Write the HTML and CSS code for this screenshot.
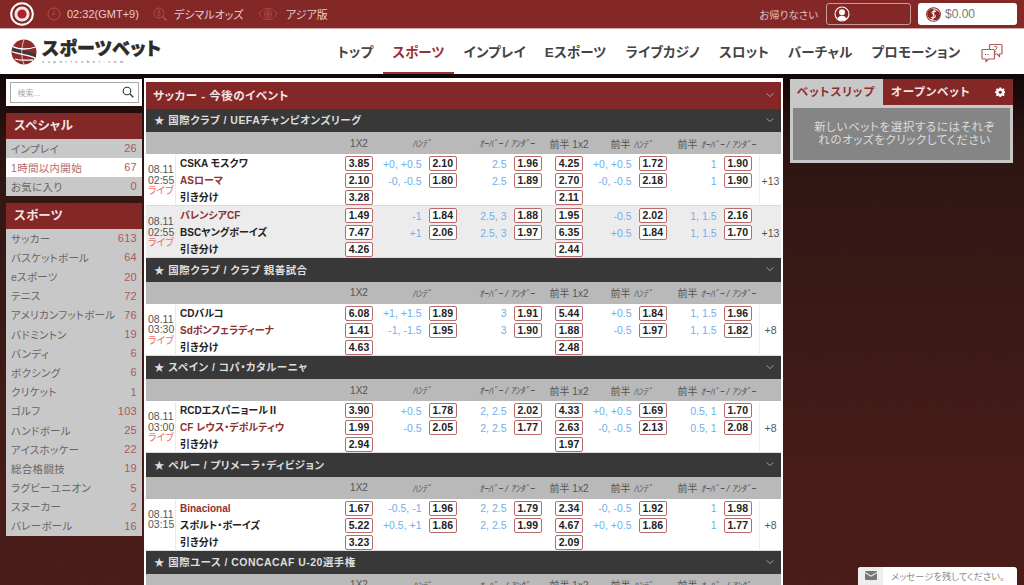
FILE: index.html
```html
<!DOCTYPE html>
<html lang="ja">
<head>
<meta charset="utf-8">
<title>スポーツベット</title>
<link rel="stylesheet" href="styles.css">
</head>
<body>
<div class="topbar">
  <svg class="brand-dot" viewBox="0 0 24 24"><circle cx="12" cy="12" r="10.8" fill="none" stroke="#fff" stroke-width="2"/><circle cx="12" cy="12" r="7.6" fill="#f3e6e6"/><circle cx="12" cy="12" r="4.6" fill="#b3202a"/></svg>
  <div class="tb-item clock">
    <svg class="tb-ic" viewBox="0 0 14 14"><circle cx="7" cy="7" r="6" fill="none" stroke="#b04a48"/><path d="M7 3.5V7.5H4.5" fill="none" stroke="#b04a48"/></svg>
    <span>02:32(GMT+9)</span>
  </div>
  <div class="tb-item odds">
    <svg class="tb-ic" viewBox="0 0 14 14"><circle cx="6" cy="6" r="5" fill="none" stroke="#b04a48"/><path d="M9.6 9.6L13.4 13.4" stroke="#b04a48" stroke-width="1.6"/><path d="M7.6 4.2C6.6 3.4 4.6 3.6 4.6 4.8S7.6 6 7.6 7.3 5.4 8.700 4.300 7.800M6 2.500V9.500" fill="none" stroke="#b04a48" stroke-width=".8"/></svg>
    <span>デシマルオッズ</span>
  </div>
  <div class="tb-item view">
    <svg class="tb-eye" viewBox="0 0 20 14"><path d="M1 7C4 2.500 7 1.500 10 1.500S16 2.500 19 7C16 11.500 13 12.500 10 12.500S4 11.500 1 7Z" fill="none" stroke="#b04a48"/><circle cx="10" cy="7" r="3.600" fill="none" stroke="#b04a48"/><circle cx="10" cy="7" r="1.800" fill="#b04a48"/></svg>
    <span>アジア版</span>
  </div>
  <div class="tb-right">
    <span class="greet">お帰りなさい</span>
    <div class="user-box">
      <svg class="user-ic" viewBox="0 0 16 16"><circle cx="8" cy="8" r="7" fill="none" stroke="#fff" stroke-width="1.100"/><circle cx="8" cy="6.200" r="3" fill="#fff"/><path d="M3.300 13C4 10.500 6 9.800 8 9.800S12 10.500 12.700 13C10 15 6 15 3.300 13Z" fill="#fff"/></svg>
    </div>
    <div class="balance">
      <svg class="bal-ic" viewBox="0 0 16 16"><circle cx="8" cy="8" r="7.300" fill="none" stroke="#842827" stroke-width="1.100"/><path d="M10.800 3.500A5.600 5.600 0 1 0 5.500 13Z" fill="#842827"/><path d="M5.200 12.500A5.600 5.600 0 1 0 11 3.300Z" fill="#842827"/><path d="M10.600 5C9.500 4 6.300 4.300 6.300 6S10 7.500 10 9.700 6.800 11.800 5.500 10.700M8.800 2L7.200 14" fill="none" stroke="#fff" stroke-width="1.100"/></svg>
      <span>$0.00</span>
    </div>
  </div>
</div>

<header class="header">
  <div class="logo">
    <svg class="logo-ball" viewBox="0 0 26 26">
      <circle cx="13" cy="13" r="12.500" fill="#8d2a2a"/>
      <path d="M2 8C8 12 18 12 25 15V19C18 15 7 15 1 12Z" fill="#3a3a3a"/>
      <path d="M2 7.500C8 11 18 10.500 24.500 8M1 12.500C7 15.500 18 15.500 25 19.500M4 20C10 22 17 21 22 21" fill="none" stroke="#fff" stroke-width="1.300"/>
      <path d="M13 .5C10 8 10 18 13 25.500" fill="none" stroke="#fff" stroke-width=".7"/>
    </svg>
    <div class="logo-text">
      <div class="logo-main">スポーツベット</div>
      <div class="logo-sub">suportsubet.com</div>
    </div>
  </div>
  <nav class="nav">
    <a class="nav-item">トップ</a>
    <a class="nav-item active">スポーツ</a>
    <a class="nav-item">インプレイ</a>
    <a class="nav-item">Eスポーツ</a>
    <a class="nav-item">ライブカジノ</a>
    <a class="nav-item">スロット</a>
    <a class="nav-item">バーチャル</a>
    <a class="nav-item">プロモーション</a>
  </nav>
  <svg class="chat-ic" viewBox="0 0 22 20"><path d="M8.500 2.500a1 1 0 0 1 1-1H20a1 1 0 0 1 1 1V10a1 1 0 0 1-1 1h-1.500v2.500L16 11H9.500a1 1 0 0 1-1-1Z" fill="#fff" stroke="#b05a5a" stroke-width="1.200"/><path d="M1 7.500a1 1 0 0 1 1-1h10.500a1 1 0 0 1 1 1V15a1 1 0 0 1-1 1H7.500L5 18.500V16H2a1 1 0 0 1-1-1Z" fill="#fff" stroke="#b05a5a" stroke-width="1.200"/><path d="M13 4.200C13.300 3 16 3 16 4.600 16 5.800 14.700 5.600 14.700 7M14.700 8.200V9" fill="none" stroke="#8a2a2a" stroke-width=".9"/><path d="M4 11.500h1M6.500 11.500h1" stroke="#8a2a2a"/></svg>
</header>

<div class="content">
  <aside class="left">
    <div class="search">
      <div class="search-in">
        <span>検索...</span>
        <svg viewBox="0 0 12 12"><circle cx="5" cy="5" r="3.800" fill="none" stroke="#333" stroke-width="1.100"/><path d="M8 8L11.300 11.300" stroke="#333" stroke-width="1.300"/></svg>
      </div>
    </div>
    <section class="side-box">
      <h3>スペシャル</h3>
      <div class="side-row"><span>インプレイ</span><em>26</em></div>
      <div class="side-row on"><span>1時間以内開始</span><em>67</em></div>
      <div class="side-row"><span>お気に入り</span><em>0</em></div>
    </section>
    <section class="side-box">
      <h3>スポーツ</h3>
      <div class="side-row"><span>サッカー</span><em>613</em></div>
      <div class="side-row"><span>バスケットボール</span><em>64</em></div>
      <div class="side-row"><span>eスポーツ</span><em>20</em></div>
      <div class="side-row"><span>テニス</span><em>72</em></div>
      <div class="side-row"><span>アメリカンフットボール</span><em>76</em></div>
      <div class="side-row"><span>バドミントン</span><em>19</em></div>
      <div class="side-row"><span>バンディ</span><em>6</em></div>
      <div class="side-row"><span>ボクシング</span><em>6</em></div>
      <div class="side-row"><span>クリケット</span><em>1</em></div>
      <div class="side-row"><span>ゴルフ</span><em>103</em></div>
      <div class="side-row"><span>ハンドボール</span><em>25</em></div>
      <div class="side-row"><span>アイスホッケー</span><em>22</em></div>
      <div class="side-row"><span>総合格闘技</span><em>19</em></div>
      <div class="side-row"><span>ラグビーユニオン</span><em>5</em></div>
      <div class="side-row"><span>スヌーカー</span><em>2</em></div>
      <div class="side-row"><span>バレーボール</span><em>16</em></div>
    </section>
  </aside>

  <main class="main">
    <div class="main-head"><span>サッカー - 今後のイベント</span><svg class="chev" viewBox="0 0 10 6"><path d="M1.500 1.500L5 4.500L8.500 1.500" fill="none" stroke="#c98f8f"/></svg></div>

    <div class="league"><span>★ 国際クラブ / UEFAチャンピオンズリーグ</span><svg class="chev" viewBox="0 0 10 6"><path d="M1.500 1.500L5 4.500L8.500 1.500" fill="none" stroke="#999"/></svg></div>
    <div class="labels"><i></i><i></i><b>1X2</b><b class="hw">ﾊﾝﾃﾞ</b><b class="hw">ｵｰﾊﾞｰ / ｱﾝﾀﾞｰ</b><b>前半 1x2</b><b>前半 <span class="hw">ﾊﾝﾃﾞ</span></b><b>前半 <span class="hw">ｵｰﾊﾞｰ / ｱﾝﾀﾞｰ</span></b><i></i></div>
    <div class="match">
      <div class="time">08.11<br>02:55<br><span class="live">ライブ</span></div>
      <div class="teams"><div>CSKA モスクワ</div><div class="hl">ASローマ</div><div>引き分け</div></div>
      <div class="mid"><b class="odd">3.85</b><b class="odd">2.10</b><b class="odd">3.28</b></div>
      <div class="side"><div class="ln"><span>+0, +0.5</span><b class="odd">2.10</b></div><div class="ln"><span>-0, -0.5</span><b class="odd">1.80</b></div></div>
      <div class="side"><div class="ln"><span>2.5</span><b class="odd">1.96</b></div><div class="ln"><span>2.5</span><b class="odd">1.89</b></div></div>
      <div class="mid"><b class="odd">4.25</b><b class="odd">2.70</b><b class="odd">2.11</b></div>
      <div class="side"><div class="ln"><span>+0, +0.5</span><b class="odd">1.72</b></div><div class="ln"><span>-0, -0.5</span><b class="odd">2.18</b></div></div>
      <div class="side"><div class="ln"><span>1</span><b class="odd">1.90</b></div><div class="ln"><span>1</span><b class="odd">1.90</b></div></div>
      <div class="more">+13</div>
    </div>
    <div class="match alt">
      <div class="time">08.11<br>02:55<br><span class="live">ライブ</span></div>
      <div class="teams"><div class="hl">バレンシアCF</div><div>BSCヤングボーイズ</div><div>引き分け</div></div>
      <div class="mid"><b class="odd">1.49</b><b class="odd">7.47</b><b class="odd">4.26</b></div>
      <div class="side"><div class="ln"><span>-1</span><b class="odd">1.84</b></div><div class="ln"><span>+1</span><b class="odd">2.06</b></div></div>
      <div class="side"><div class="ln"><span>2.5, 3</span><b class="odd">1.88</b></div><div class="ln"><span>2.5, 3</span><b class="odd">1.97</b></div></div>
      <div class="mid"><b class="odd">1.95</b><b class="odd">6.35</b><b class="odd">2.44</b></div>
      <div class="side"><div class="ln"><span>-0.5</span><b class="odd">2.02</b></div><div class="ln"><span>+0.5</span><b class="odd">1.84</b></div></div>
      <div class="side"><div class="ln"><span>1, 1.5</span><b class="odd">2.16</b></div><div class="ln"><span>1, 1.5</span><b class="odd">1.70</b></div></div>
      <div class="more">+13</div>
    </div>

    <div class="league"><span>★ 国際クラブ / クラブ 親善試合</span><svg class="chev" viewBox="0 0 10 6"><path d="M1.500 1.500L5 4.500L8.500 1.500" fill="none" stroke="#999"/></svg></div>
    <div class="labels"><i></i><i></i><b>1X2</b><b class="hw">ﾊﾝﾃﾞ</b><b class="hw">ｵｰﾊﾞｰ / ｱﾝﾀﾞｰ</b><b>前半 1x2</b><b>前半 <span class="hw">ﾊﾝﾃﾞ</span></b><b>前半 <span class="hw">ｵｰﾊﾞｰ / ｱﾝﾀﾞｰ</span></b><i></i></div>
    <div class="match">
      <div class="time">08.11<br>03:30<br><span class="live">ライブ</span></div>
      <div class="teams"><div>CDバルコ</div><div class="hl">Sdポンフェラディーナ</div><div>引き分け</div></div>
      <div class="mid"><b class="odd">6.08</b><b class="odd">1.41</b><b class="odd">4.63</b></div>
      <div class="side"><div class="ln"><span>+1, +1.5</span><b class="odd">1.89</b></div><div class="ln"><span>-1, -1.5</span><b class="odd">1.95</b></div></div>
      <div class="side"><div class="ln"><span>3</span><b class="odd">1.91</b></div><div class="ln"><span>3</span><b class="odd">1.90</b></div></div>
      <div class="mid"><b class="odd">5.44</b><b class="odd">1.88</b><b class="odd">2.48</b></div>
      <div class="side"><div class="ln"><span>+0.5</span><b class="odd">1.84</b></div><div class="ln"><span>-0.5</span><b class="odd">1.97</b></div></div>
      <div class="side"><div class="ln"><span>1, 1.5</span><b class="odd">1.96</b></div><div class="ln"><span>1, 1.5</span><b class="odd">1.82</b></div></div>
      <div class="more">+8</div>
    </div>

    <div class="league"><span>★ スペイン / コパ・カタルーニャ</span><svg class="chev" viewBox="0 0 10 6"><path d="M1.500 1.500L5 4.500L8.500 1.500" fill="none" stroke="#999"/></svg></div>
    <div class="labels"><i></i><i></i><b>1X2</b><b class="hw">ﾊﾝﾃﾞ</b><b class="hw">ｵｰﾊﾞｰ / ｱﾝﾀﾞｰ</b><b>前半 1x2</b><b>前半 <span class="hw">ﾊﾝﾃﾞ</span></b><b>前半 <span class="hw">ｵｰﾊﾞｰ / ｱﾝﾀﾞｰ</span></b><i></i></div>
    <div class="match">
      <div class="time">08.11<br>03:00<br><span class="live">ライブ</span></div>
      <div class="teams"><div>RCDエスパニョールⅡ</div><div class="hl">CF レウス・デポルティウ</div><div>引き分け</div></div>
      <div class="mid"><b class="odd">3.90</b><b class="odd">1.99</b><b class="odd">2.94</b></div>
      <div class="side"><div class="ln"><span>+0.5</span><b class="odd">1.78</b></div><div class="ln"><span>-0.5</span><b class="odd">2.05</b></div></div>
      <div class="side"><div class="ln"><span>2, 2.5</span><b class="odd">2.02</b></div><div class="ln"><span>2, 2.5</span><b class="odd">1.77</b></div></div>
      <div class="mid"><b class="odd">4.33</b><b class="odd">2.63</b><b class="odd">1.97</b></div>
      <div class="side"><div class="ln"><span>+0, +0.5</span><b class="odd">1.69</b></div><div class="ln"><span>-0, -0.5</span><b class="odd">2.13</b></div></div>
      <div class="side"><div class="ln"><span>0.5, 1</span><b class="odd">1.70</b></div><div class="ln"><span>0.5, 1</span><b class="odd">2.08</b></div></div>
      <div class="more">+8</div>
    </div>

    <div class="league"><span>★ ペルー / プリメーラ・ディビジョン</span><svg class="chev" viewBox="0 0 10 6"><path d="M1.500 1.500L5 4.500L8.500 1.500" fill="none" stroke="#999"/></svg></div>
    <div class="labels"><i></i><i></i><b>1X2</b><b class="hw">ﾊﾝﾃﾞ</b><b class="hw">ｵｰﾊﾞｰ / ｱﾝﾀﾞｰ</b><b>前半 1x2</b><b>前半 <span class="hw">ﾊﾝﾃﾞ</span></b><b>前半 <span class="hw">ｵｰﾊﾞｰ / ｱﾝﾀﾞｰ</span></b><i></i></div>
    <div class="match">
      <div class="time">08.11<br>03:15</div>
      <div class="teams"><div class="hl">Binacional</div><div>スポルト・ボーイズ</div><div>引き分け</div></div>
      <div class="mid"><b class="odd">1.67</b><b class="odd">5.22</b><b class="odd">3.23</b></div>
      <div class="side"><div class="ln"><span>-0.5, -1</span><b class="odd">1.96</b></div><div class="ln"><span>+0.5, +1</span><b class="odd">1.86</b></div></div>
      <div class="side"><div class="ln"><span>2, 2.5</span><b class="odd">1.79</b></div><div class="ln"><span>2, 2.5</span><b class="odd">1.99</b></div></div>
      <div class="mid"><b class="odd">2.34</b><b class="odd">4.67</b><b class="odd">2.09</b></div>
      <div class="side"><div class="ln"><span>-0, -0.5</span><b class="odd">1.92</b></div><div class="ln"><span>+0, +0.5</span><b class="odd">1.86</b></div></div>
      <div class="side"><div class="ln"><span>1</span><b class="odd">1.98</b></div><div class="ln"><span>1</span><b class="odd">1.77</b></div></div>
      <div class="more">+8</div>
    </div>

    <div class="league"><span>★ 国際ユース / CONCACAF U-20選手権</span><svg class="chev" viewBox="0 0 10 6"><path d="M1.500 1.500L5 4.500L8.500 1.500" fill="none" stroke="#999"/></svg></div>
    <div class="labels"><i></i><i></i><b>1X2</b><b class="hw">ﾊﾝﾃﾞ</b><b class="hw">ｵｰﾊﾞｰ / ｱﾝﾀﾞｰ</b><b>前半 1x2</b><b>前半 <span class="hw">ﾊﾝﾃﾞ</span></b><b>前半 <span class="hw">ｵｰﾊﾞｰ / ｱﾝﾀﾞｰ</span></b><i></i></div>
  </main>

  <aside class="right">
    <div class="tabs">
      <div class="tab on">ベットスリップ</div>
      <div class="tab open"><span>オープンベット</span>
        <svg class="gear" viewBox="0 0 12 12"><path d="M5 .5h2l.3 1.500 1 .4L9.600 1.600 11 3l-.8 1.300.4 1L12 5.500v2l-1.400.3-.4 1 .8 1.300L9.600 11.500l-1.300-.8-1 .4L7 12.500H5l-.3-1.400-1-.4-1.300.8L1 10.100l.8-1.300-.4-1L0 7.500v-2l1.400-.2.4-1L1 3l1.400-1.400 1.300.8 1-.4Z" fill="#fff" transform="scale(1 .92)"/><circle cx="6" cy="6" r="1.800" fill="#842827"/></svg>
      </div>
    </div>
    <div class="slip"><p>新しいベットを選択するにはそれぞれのオッズをクリックしてください</p></div>
  </aside>
</div>

<div class="msg">
  <div class="msg-ic"><svg viewBox="0 0 12 9"><path d="M0 1a1 1 0 0 1 1-1h10a1 1 0 0 1 1 1L6 4.500ZM0 2.300L6 5.800 12 2.300V8a1 1 0 0 1-1 1H1a1 1 0 0 1-1-1Z" fill="#777"/></svg></div>
  <span>メッセージを残してください。</span>
</div>
</body>
</html>
```
FILE: styles.css
```css
* { box-sizing: border-box; }
html, body { margin: 0; height: 585px; overflow: hidden; }
body {
  font-family: "Liberation Sans", "Noto Sans CJK JP", sans-serif;
  font-feature-settings: "palt";
  background: #160808;
  display: flex;
  flex-direction: column;
  color: #333;
}

/* top bar */
.topbar {
  height: 29px;
  flex: none;
  background: #842827;
  border-bottom: 1px solid #cfa9a8;
  display: flex;
  align-items: center;
  padding-left: 10px;
  color: #e3cfcf;
  font-size: 11px;
}
.brand-dot { width: 24px; height: 24px; margin-right: 13px; }
.tb-item { display: flex; align-items: center; gap: 6px; }
.tb-ic { width: 14px; height: 14px; }
.tb-eye { width: 20px; height: 14px; }
.clock { width: 106px; }
.odds { width: 105px; gap: 7px; }
.view { gap: 8px; }
.tb-right { margin-left: auto; display: flex; align-items: center; padding-right: 7px; }
.greet { font-size: 10.500px; color: #dcc0c0; margin-right: 8px; }
.user-box {
  width: 85px; height: 22px;
  border: 1px solid #c99a9a; border-radius: 3px;
  display: flex; align-items: center; padding-left: 7px;
  margin-right: 7px;
}
.user-ic { width: 16px; height: 16px; }
.balance {
  width: 99px; height: 22px;
  background: #fff; border-radius: 3px;
  display: flex; align-items: center; padding-left: 8px; gap: 4px;
  color: #777; font-size: 12px;
}
.bal-ic { width: 15px; height: 15px; }

/* header */
.header {
  height: 45px;
  flex: none;
  background: #fff;
  display: flex;
  align-items: stretch;
  padding: 0 21px 0 11px;
}
.logo { display: flex; align-items: center; gap: 5px; }
.logo-ball { width: 26px; height: 26px; }
.logo-main { font-size: 18px; font-weight: 900; color: #2b2b2b; line-height: 19px; letter-spacing: .35px; -webkit-text-stroke: .4px #2b2b2b; }
.logo-sub { font-size: 4px; line-height: 5px; letter-spacing: 3.700px; color: #666; }
.nav { margin-left: auto; display: flex; margin-right: 11px; }
.nav-item {
  padding: 5px 9.500px 0;
  font-size: 13.500px;
  font-weight: 700;
  color: #444;
  line-height: 37px;
  letter-spacing: .2px;
  white-space: nowrap;
  height: 45px;
}
.nav-item.active { color: #9c2f2f; border-bottom: 2px solid #9c2f2f; }
.chat-ic { width: 22px; height: 20px; align-self: center; margin-top: 3px; }

/* content */
.content {
  flex: 1;
  min-height: 0;
  background:
    url("data:image/svg+xml,%3Csvg xmlns='http://www.w3.org/2000/svg' width='240' height='240'%3E%3Cfilter id='n'%3E%3CfeTurbulence type='fractalNoise' baseFrequency='.8' numOctaves='2'/%3E%3CfeColorMatrix values='0 0 0 0 0 0 0 0 0 0 0 0 0 0 0 0 0 0 .12 0'/%3E%3C/filter%3E%3Crect width='240' height='240' filter='url(%23n)'/%3E%3C/svg%3E"),
    linear-gradient(#120606 0, #2c1513 60px, #341815 110px, #411c18 280px, #4d1e1a 420px, #4f1e1a 100%);
  display: grid;
  grid-template-columns: 136px 639px 228px;
  column-gap: 2px;
  padding: 5px 0 0 6px;
}
.left { display: flex; flex-direction: column; gap: 7px; }
.search { background: #fff; height: 27px; padding: 2.500px 3.500px; }
.search-in {
  height: 21px;
  border: 1px solid #a9a9a9;
  display: flex; align-items: center; justify-content: space-between;
  padding: 0 4px 0 7px;
  font-size: 8px; color: #aaa;
}
.search-in svg { width: 12px; height: 12px; }
.side-box { background: #c8c8c8; }
.side-box h3 {
  margin: 0;
  height: 25.500px;
  background: #842827;
  color: #f2e6e6;
  font-size: 12.500px;
  font-weight: 700;
  line-height: 27px;
  padding-left: 8px;
  letter-spacing: .3px;
}
.side-row {
  height: 19.200px;
  display: flex; justify-content: space-between; align-items: center;
  padding: 0 5px;
  font-size: 10.500px;
  color: #666;
  letter-spacing: .3px;
}
.side-row em { font-style: normal; color: #a85a5a; font-size: 11px; }
.side-row.on { background: #fff; color: #b26a6a; }

/* main column */
.main { background: #fff; padding: 4px 2px 0; overflow: hidden; margin-top: -1px; }
.main-head {
  height: 27px;
  background: #842827;
  display: flex; align-items: center; justify-content: space-between;
  padding: 0 6px 1.500px 7px;
  color: #f3e6e6;
  font-size: 11.500px;
  font-weight: 700;
  letter-spacing: .5px;
}
.chev { width: 10px; height: 6px; }
.league {
  height: 23.400px;
  background: #383838;
  display: flex; align-items: center; justify-content: space-between;
  padding: 0 6px 1.500px 8px;
  color: #ddd;
  font-size: 10.500px;
  font-weight: 700;
  letter-spacing: .45px;
}
.labels, .match {
  display: grid;
  grid-template-columns: 30px 162px 42px 84px 85px 40px 85px 85px 22px;
}
.labels {
  height: 22px;
  background: #b9b9b9;
  align-items: center;
  text-align: center;
  color: #555;
  font-size: 10px;
}
.labels b { font-weight: 400; white-space: nowrap; }
.hw { font-size: 9.500px; font-style: italic; }
.match {
  height: 52px;
  background: #fff;
  border-bottom: 1px solid #dcdcdc;
  padding-top: 1px;
}
.match.alt { background: #ececec; }
.time {
  font-size: 10.500px; line-height: 10.500px; color: #555;
  padding: 9px 0 0 2px;
  border-right: 1px solid #e9e9e9;
  white-space: nowrap;
}
.live { color: #f06a6a; font-size: 9.800px; }
.teams { padding-left: 4px; font-size: 10px; font-weight: 700; color: #222; }
.teams div { height: 17px; line-height: 17px; white-space: nowrap; }
.teams .hl { color: #8f2f2f; }
.mid { display: flex; flex-direction: column; align-items: center; }
.side { padding-right: 7px; }
.ln { height: 17px; display: flex; justify-content: flex-end; align-items: center; gap: 7px; color: #6fb0ee; font-size: 10.500px; }
.odd {
  width: 28.500px; height: 15px;
  flex: none;
  margin: 1px 0;
  border: 1px solid #b96a6a;
  border-radius: 2px;
  background: #fff;
  font-size: 10.500px;
  font-weight: 700;
  color: #222;
  text-align: center;
  line-height: 13px;
}
.more {
  border-left: 1px solid #eee;
  font-size: 10.500px; color: #555;
  display: flex; align-items: center; justify-content: center;
}

/* right column */
.right { margin-left: 5px; }
.tabs { display: flex; height: 25.500px; }
.tab { font-size: 11.500px; font-weight: 700; line-height: 26px; letter-spacing: .9px; }
.tab.on { width: 93px; background: #c8c8c8; color: #8f2f2f; padding-left: 7px; }
.tab.open { flex: 1; background: #842827; color: #f3e6e6; padding: 0 8px 0 8px; display: flex; align-items: center; justify-content: space-between; }
.gear { width: 10.500px; height: 10.500px; }
.slip { background: #c8c8c8; padding: 3px; height: 58px; }
.slip p {
  margin: 0;
  height: 52px;
  background: #858585;
  color: #dcdcdc;
  font-size: 11.500px;
  line-height: 13px;
  text-align: center;
  padding: 13px 13px 0 19px;
  letter-spacing: .6px;
}

/* message tab */
.msg {
  position: fixed;
  right: 7px;
  bottom: 0;
  width: 159px;
  height: 18.500px;
  background: #fff;
  border-radius: 3px 3px 0 0;
  display: flex; align-items: center;
  font-size: 9.300px;
  color: #8a8a8a;
}
.msg-ic { width: 25px; height: 100%; background: #eee; border-radius: 3px 0 0 0; display: flex; align-items: center; justify-content: center; margin-right: 8px; }
.msg-ic svg { width: 12px; height: 9px; }
```
